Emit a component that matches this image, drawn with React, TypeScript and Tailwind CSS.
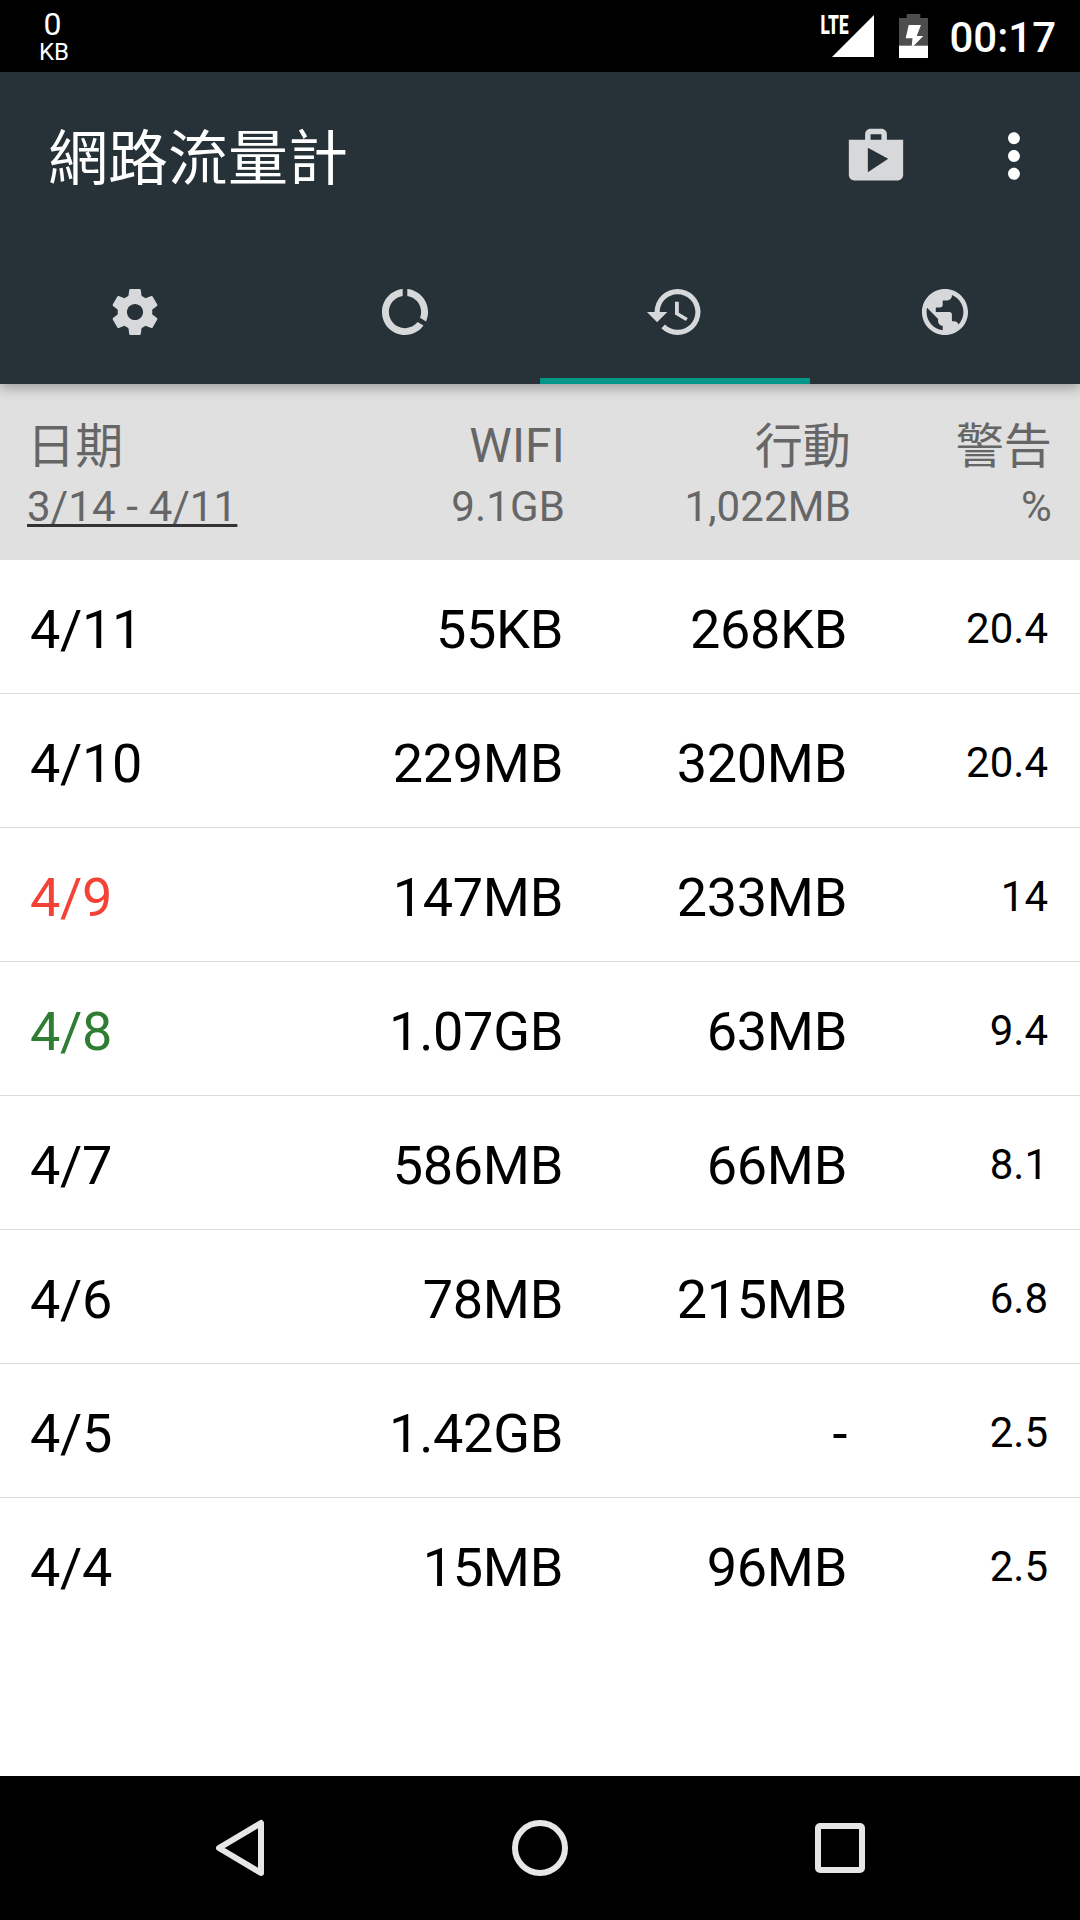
type Row = {
  date: string;
  wifi: string;
  mobile: string;
  percent: string;
  color?: string;
};

const rows: Row[] = [
  { date: "4/11", wifi: "55KB", mobile: "268KB", percent: "20.4" },
  { date: "4/10", wifi: "229MB", mobile: "320MB", percent: "20.4" },
  { date: "4/9", wifi: "147MB", mobile: "233MB", percent: "14", color: "text-[#f44336]" },
  { date: "4/8", wifi: "1.07GB", mobile: "63MB", percent: "9.4", color: "text-[#2e7d32]" },
  { date: "4/7", wifi: "586MB", mobile: "66MB", percent: "8.1" },
  { date: "4/6", wifi: "78MB", mobile: "215MB", percent: "6.8" },
  { date: "4/5", wifi: "1.42GB", mobile: "-", percent: "2.5" },
  { date: "4/4", wifi: "15MB", mobile: "96MB", percent: "2.5" },
];

const icons = {
  shop: "M16 6V4c0-1.11-.89-2-2-2h-4c-1.11 0-2 .89-2 2v2H2v13c0 1.11.89 2 2 2h16c1.11 0 2-.89 2-2V6h-6zm-6-2h4v2h-4V4zM9 18V9l7.5 4L9 18z",
  more: "M12 8c1.1 0 2-.9 2-2s-.9-2-2-2-2 .9-2 2 .9 2 2 2zm0 2c-1.1 0-2 .9-2 2s.9 2 2 2 2-.9 2-2-.9-2-2-2zm0 6c-1.1 0-2 .9-2 2s.9 2 2 2 2-.9 2-2-.9-2-2-2z",
  settings:
    "M19.43 12.98c.04-.32.07-.64.07-.98s-.03-.66-.07-.98l2.11-1.65c.19-.15.24-.42.12-.64l-2-3.46c-.12-.22-.39-.3-.61-.22l-2.49 1c-.52-.4-1.08-.73-1.69-.98l-.38-2.65C14.46 2.18 14.25 2 14 2h-4c-.25 0-.46.18-.49.42l-.38 2.65c-.61.25-1.17.59-1.69.98l-2.49-1c-.23-.09-.49 0-.61.22l-2 3.46c-.13.22-.07.49.12.64l2.11 1.65c-.04.32-.07.65-.07.98s.03.66.07.98l-2.11 1.65c-.19.15-.24.42-.12.64l2 3.46c.12.22.39.3.61.22l2.49-1c.52.4 1.08.73 1.69.98l.38 2.65c.03.24.24.42.49.42h4c.25 0 .46-.18.49-.42l.38-2.65c.61-.25 1.17-.59 1.69-.98l2.49 1c.23.09.49 0 .61-.22l2-3.46c.12-.22.07-.49-.12-.64l-2.11-1.65zM12 15.5c-1.93 0-3.5-1.57-3.5-3.5s1.57-3.5 3.5-3.5 3.5 1.57 3.5 3.5-1.57 3.5-3.5 3.5z",
  usage:
    "M13 2.05v3.03c3.39.49 6 3.39 6 6.92 0 .9-.18 1.75-.48 2.54l2.6 1.53c.56-1.24.88-2.62.88-4.07 0-5.18-3.95-9.45-9-9.95zM12 19c-3.87 0-7-3.13-7-7 0-3.53 2.61-6.43 6-6.92V2.05c-5.06.5-9 4.76-9 9.95 0 5.52 4.47 10 9.99 10 3.31 0 6.24-1.61 8.06-4.09l-2.6-1.53C16.17 17.98 14.21 19 12 19z",
  history:
    "M13 3a9 9 0 0 0-9 9H1l3.89 3.89.07.14L9 12H6c0-3.87 3.13-7 7-7s7 3.13 7 7-3.13 7-7 7c-1.93 0-3.68-.79-4.94-2.06l-1.42 1.42A8.954 8.954 0 0 0 13 21a9 9 0 0 0 0-18zm-1 5v5l4.28 2.54.72-1.21-3.5-2.08V8H12z",
  globe:
    "M12 2C6.48 2 2 6.48 2 12s4.48 10 10 10 10-4.48 10-10S17.52 2 12 2zm-1 17.93c-3.95-.49-7-3.85-7-7.93 0-.62.08-1.21.21-1.79L9 15v1c0 1.1.9 2 2 2v1.93zm6.9-2.54c-.26-.81-1-1.39-1.9-1.39h-1v-3c0-.55-.45-1-1-1H8v-2h2c.55 0 1-.45 1-1V7h2c1.1 0 2-.9 2-2v-.41c2.93 1.19 5 4.06 5 7.41 0 2.08-.8 3.97-2.1 5.39z",
};

const Icon = ({ d, className }: { d: string; className: string }) => (
  <svg viewBox="-0.15 -0.15 24.3 24.3" fill="currentColor" className={`shrink-0 ${className}`}>
    <path d={d} />
  </svg>
);

const StatusBar = () => (
  <div className="h-[72px] bg-black flex items-center justify-between pl-10 pr-6">
    <div className="flex flex-col items-center w-7 pt-px">
      <span className="text-[32px] leading-[30px] pr-[3px]">0</span>
      <span className="text-[24px] leading-[24px] pt-px">KB</span>
    </div>
    <div className="flex items-center">
      <svg viewBox="0 -6 56 60" className="w-14 h-15 mr-[23px]">
        <path d="M14 45L56 45L56 3Z" fill="#fff" />
        <text
          x="2.5"
          y="21.5"
          fill="#fff"
          fontSize="25.5"
          fontWeight="900"
          textLength="28"
          lengthAdjust="spacingAndGlyphs"
        >
          LTE
        </text>
      </svg>
      <svg viewBox="0 0 32 48" className="w-8 h-12 mr-5">
        <path d="M9.7 2h13.6v4H31v28H2V6h7.700z" fill="#4d4d4d" />
        <path d="M2 33.700h29V46H2z" fill="#fff" />
        <path d="M11.700 13H24L19.700 24H26.300L14.500 36L15.500 26.300H8.700Z" fill="#fff" />
      </svg>
      <span className="text-[42px] leading-none font-medium pt-[3px]">00:17</span>
    </div>
  </div>
);

const tabs = [
  { name: "settings", d: icons.settings, size: "size-14" },
  { name: "usage", d: icons.usage, size: "size-14" },
  { name: "history", d: icons.history, size: "size-[62px]", active: true },
  { name: "globe", d: icons.globe, size: "size-14" },
];

const AppBar = () => (
  <header className="relative bg-[#263238] shadow-[0_4px_12px_rgba(0,0,0,0.3)]">
    <div className="h-[168px] flex items-center pl-12 pr-[30px]">
      <h1 className="flex-1 text-[60px] leading-none pt-[7px]">網路流量計</h1>
      <Icon d={icons.shop} className="size-[66px] mr-[69px] text-[#d7d8da]" />
      <Icon d={icons.more} className="size-[72px]" />
    </div>
    <nav className="h-36 grid grid-cols-4 text-[#d7d8da]">
      {tabs.map((tab) => (
        <div
          key={tab.name}
          className={`flex items-center justify-center border-b-6 pt-1.5 ${
            tab.active ? "border-[#009688]" : "border-transparent"
          }`}
        >
          <Icon d={tab.d} className={tab.size} />
        </div>
      ))}
    </nav>
  </header>
);

const TableHeader = () => (
  <div className="h-44 bg-[#e0e0e0] text-[#666] tracking-[0.15px] pl-[27px] pr-7 pt-[34px] flex text-right">
    <div className="w-[250px] text-left">
      <p className="text-[48px] leading-14 pt-px">日期</p>
      <p className="mt-1 text-[42px] leading-14 underline decoration-[#333] decoration-3 underline-offset-3 [text-decoration-skip-ink:none]">
        3/14 - 4/11
      </p>
    </div>
    <div className="w-[288px]">
      <p className="text-[48px] leading-14">WIFI</p>
      <p className="mt-[5px] text-[42px] leading-14">9.1GB</p>
    </div>
    <div className="w-[286px]">
      <p className="text-[48px] leading-14 pt-px">行動</p>
      <p className="mt-1 text-[42px] leading-14">1,022MB</p>
    </div>
    <div className="w-[201px]">
      <p className="text-[48px] leading-14 pt-px">警告</p>
      <p className="mt-1 text-[42px] leading-14">%</p>
    </div>
  </div>
);

const TableRow = ({ row }: { row: Row }) => (
  <div className="h-[134px] px-[30px] pt-1.5 flex items-center text-[54px] leading-none tracking-[-0.3px] text-right text-black border-b border-[#dcdcdc] last:border-transparent">
    <span className={`w-[240px] text-left ${row.color ?? ""}`}>{row.date}</span>
    <span className="w-[293px]">{row.wifi}</span>
    <span className="w-[284px]">{row.mobile}</span>
    <span className="w-[201px] text-[42px] tracking-normal pb-0.5">{row.percent}</span>
  </div>
);

const NavBar = () => (
  <footer className="h-36 bg-black flex items-center justify-center gap-60 text-[#e6e6e6]">
    <svg viewBox="0 0 60 60" className="size-[60px]" fill="none" stroke="currentColor" strokeWidth="6" strokeLinejoin="round">
      <path d="M51 5L51 55L9 30Z" />
    </svg>
    <svg viewBox="0 0 60 60" className="size-[60px]" fill="none" stroke="currentColor" strokeWidth="6">
      <circle cx="30" cy="30" r="25" />
    </svg>
    <svg viewBox="0 0 60 60" className="size-[60px]" fill="none" stroke="currentColor" strokeWidth="6">
      <rect x="8" y="8" width="44" height="44" rx="2" />
    </svg>
  </footer>
);

const App = () => (
  <div className="w-[1080px] h-[1920px] flex flex-col overflow-hidden bg-white text-white font-[Roboto,'Noto_Sans_CJK_TC',sans-serif]">
    <StatusBar />
    <AppBar />
    <main className="flex-1">
      <TableHeader />
      <div>
        {rows.map((row) => (
          <TableRow key={row.date} row={row} />
        ))}
      </div>
    </main>
    <NavBar />
  </div>
);

export default App;
